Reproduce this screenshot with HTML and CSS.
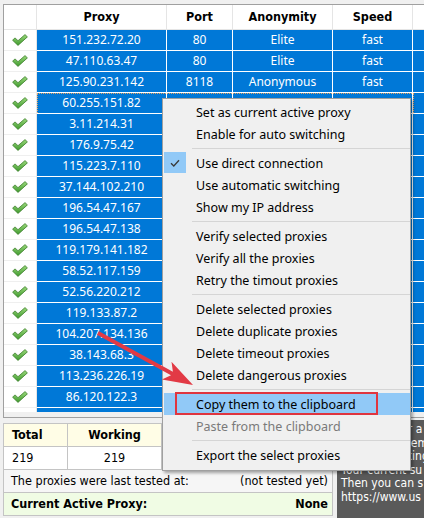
FILE: index.html
```html
<!DOCTYPE html>
<html>
<head>
<meta charset="utf-8">
<link rel="stylesheet" href="styles.css">
</head>
<body>
<svg class="defs" width="0" height="0">
  <defs>
    <linearGradient id="g" x1="0" y1="0" x2="0" y2="1">
      <stop offset="0" stop-color="#9ad97a"/>
      <stop offset="1" stop-color="#3f9a2e"/>
    </linearGradient>
    <symbol id="ok" viewBox="0 0 16 12">
      <polygon points="0.6,6.2 3,3.9 6,6.7 13,0.6 15.4,2.9 6,11.4" fill="url(#g)" stroke="#3d7f2d" stroke-width="0.8" stroke-linejoin="round"/>
    </symbol>
  </defs>
</svg>

<div class="frame">
  <div class="list">
    <div class="row head">
      <div class="cell chk"></div>
      <div class="cell proxy">Proxy</div>
      <div class="cell port">Port</div>
      <div class="cell anon">Anonymity</div>
      <div class="cell speed">Speed</div>
      <div class="cell fill"></div>
    </div>
    <div class="row"><div class="cell chk"><svg class="ok"><use href="#ok"/></svg></div><div class="cell proxy">151.232.72.20</div><div class="cell port">80</div><div class="cell anon">Elite</div><div class="cell speed">fast</div><div class="cell fill"></div></div>
    <div class="row"><div class="cell chk"><svg class="ok"><use href="#ok"/></svg></div><div class="cell proxy">47.110.63.47</div><div class="cell port">80</div><div class="cell anon">Elite</div><div class="cell speed">fast</div><div class="cell fill"></div></div>
    <div class="row"><div class="cell chk"><svg class="ok"><use href="#ok"/></svg></div><div class="cell proxy">125.90.231.142</div><div class="cell port">8118</div><div class="cell anon">Anonymous</div><div class="cell speed">fast</div><div class="cell fill"></div></div>
    <div class="row focus"><div class="cell chk"><svg class="ok"><use href="#ok"/></svg></div><div class="cell proxy">60.255.151.82</div><div class="cell port"></div><div class="cell anon"></div><div class="cell speed"></div><div class="cell fill"></div></div>
    <div class="row"><div class="cell chk"><svg class="ok"><use href="#ok"/></svg></div><div class="cell proxy">3.11.214.31</div><div class="cell port"></div><div class="cell anon"></div><div class="cell speed"></div><div class="cell fill"></div></div>
    <div class="row"><div class="cell chk"><svg class="ok"><use href="#ok"/></svg></div><div class="cell proxy">176.9.75.42</div><div class="cell port"></div><div class="cell anon"></div><div class="cell speed"></div><div class="cell fill"></div></div>
    <div class="row"><div class="cell chk"><svg class="ok"><use href="#ok"/></svg></div><div class="cell proxy">115.223.7.110</div><div class="cell port"></div><div class="cell anon"></div><div class="cell speed"></div><div class="cell fill"></div></div>
    <div class="row"><div class="cell chk"><svg class="ok"><use href="#ok"/></svg></div><div class="cell proxy">37.144.102.210</div><div class="cell port"></div><div class="cell anon"></div><div class="cell speed"></div><div class="cell fill"></div></div>
    <div class="row"><div class="cell chk"><svg class="ok"><use href="#ok"/></svg></div><div class="cell proxy">196.54.47.167</div><div class="cell port"></div><div class="cell anon"></div><div class="cell speed"></div><div class="cell fill"></div></div>
    <div class="row"><div class="cell chk"><svg class="ok"><use href="#ok"/></svg></div><div class="cell proxy">196.54.47.138</div><div class="cell port"></div><div class="cell anon"></div><div class="cell speed"></div><div class="cell fill"></div></div>
    <div class="row"><div class="cell chk"><svg class="ok"><use href="#ok"/></svg></div><div class="cell proxy">119.179.141.182</div><div class="cell port"></div><div class="cell anon"></div><div class="cell speed"></div><div class="cell fill"></div></div>
    <div class="row"><div class="cell chk"><svg class="ok"><use href="#ok"/></svg></div><div class="cell proxy">58.52.117.159</div><div class="cell port"></div><div class="cell anon"></div><div class="cell speed"></div><div class="cell fill"></div></div>
    <div class="row"><div class="cell chk"><svg class="ok"><use href="#ok"/></svg></div><div class="cell proxy">52.56.220.212</div><div class="cell port"></div><div class="cell anon"></div><div class="cell speed"></div><div class="cell fill"></div></div>
    <div class="row"><div class="cell chk"><svg class="ok"><use href="#ok"/></svg></div><div class="cell proxy">119.133.87.2</div><div class="cell port"></div><div class="cell anon"></div><div class="cell speed"></div><div class="cell fill"></div></div>
    <div class="row"><div class="cell chk"><svg class="ok"><use href="#ok"/></svg></div><div class="cell proxy">104.207.134.136</div><div class="cell port"></div><div class="cell anon"></div><div class="cell speed"></div><div class="cell fill"></div></div>
    <div class="row"><div class="cell chk"><svg class="ok"><use href="#ok"/></svg></div><div class="cell proxy">38.143.68.3</div><div class="cell port"></div><div class="cell anon"></div><div class="cell speed"></div><div class="cell fill"></div></div>
    <div class="row"><div class="cell chk"><svg class="ok"><use href="#ok"/></svg></div><div class="cell proxy">113.236.226.19</div><div class="cell port"></div><div class="cell anon"></div><div class="cell speed"></div><div class="cell fill"></div></div>
    <div class="row"><div class="cell chk"><svg class="ok"><use href="#ok"/></svg></div><div class="cell proxy">86.120.122.3</div><div class="cell port"></div><div class="cell anon"></div><div class="cell speed"></div><div class="cell fill"></div></div>
    <div class="row"><div class="cell chk"></div><div class="cell proxy"></div><div class="cell port"></div><div class="cell anon"></div><div class="cell speed"></div><div class="cell fill"></div></div>
  </div>
</div>

<div class="bottom">
  <div class="stats">
    <div class="srow shead"><div class="sc c1">Total</div><div class="sc c2">Working</div><div class="sc c3"></div></div>
    <div class="srow svals"><div class="sc c1">219</div><div class="sc c2">219</div><div class="sc c3"></div></div>
    <div class="srow tested"><span>The proxies were last tested at:</span><span>(not tested yet)</span></div>
    <div class="srow active"><span>Current Active Proxy:</span><span>None</span></div>
  </div>
  <div class="note">
    <div>Then wait for a</div>
    <div>Sets the system</div>
    <div>Proxy is working</div>
    <div>Your current su</div>
    <div>Then you can s</div>
    <div>https://www.us</div>
  </div>
</div>

<div class="menu">
  <div class="mi"><span class="ico"></span><span class="lbl">Set as current active proxy</span></div>
  <div class="mi"><span class="ico"></span><span class="lbl">Enable for auto switching</span></div>
  <div class="sep"></div>
  <div class="mi on"><span class="ico"><svg class="tick" viewBox="0 0 10 8"><path d="M1 4.2 L3.8 7 L9 1.2" fill="none" stroke="#3a3a3a" stroke-width="1.3"/></svg></span><span class="lbl">Use direct connection</span></div>
  <div class="mi"><span class="ico"></span><span class="lbl">Use automatic switching</span></div>
  <div class="mi"><span class="ico"></span><span class="lbl">Show my IP address</span></div>
  <div class="sep"></div>
  <div class="mi"><span class="ico"></span><span class="lbl">Verify selected proxies</span></div>
  <div class="mi"><span class="ico"></span><span class="lbl">Verify all the proxies</span></div>
  <div class="mi"><span class="ico"></span><span class="lbl">Retry the timout proxies</span></div>
  <div class="sep"></div>
  <div class="mi"><span class="ico"></span><span class="lbl">Delete selected proxies</span></div>
  <div class="mi"><span class="ico"></span><span class="lbl">Delete duplicate proxies</span></div>
  <div class="mi"><span class="ico"></span><span class="lbl">Delete timeout proxies</span></div>
  <div class="mi"><span class="ico"></span><span class="lbl">Delete dangerous proxies</span></div>
  <div class="sep"></div>
  <div class="mi hl"><span class="ico"></span><span class="lbl">Copy them to the clipboard</span><span class="mark"></span></div>
  <div class="mi dis"><span class="ico"></span><span class="lbl">Paste from the clipboard</span></div>
  <div class="sep"></div>
  <div class="mi"><span class="ico"></span><span class="lbl">Export the select proxies</span></div>
</div>

<svg class="arrow" viewBox="0 0 424 518" width="424" height="518">
  <polygon points="98.9,331.2 172.9,371.7 171.5,361.8 193,385 161.9,379.4 171,375.2 97,334.8" fill="#e23a45"/>
</svg>
</body>
</html>
```

FILE: styles.css
```css
* { box-sizing: border-box; }
html, body { margin: 0; padding: 0; }
body {
  width: 424px;
  height: 518px;
  overflow: hidden;
  position: relative;
  background: #f0f0f0;
  font-family: "Noto Sans", sans-serif;
  color: #000;
}
.defs { position: absolute; width: 0; height: 0; }

/* list view */
.frame {
  margin: 4px 0 0 3px;
  border-top: 1px solid #a0a0a0;
  border-left: 1px solid #a0a0a0;
  border-bottom: 1px solid #a0a0a0;
  padding-bottom: 5px;
}
.list { height: 407px; overflow: hidden; background: #fff; }
.row { display: flex; height: 21px; position: relative; }
.cell {
  flex: none;
  height: 21px;
  border-right: 1px solid #fff;
  border-bottom: 1px solid #fff;
  background: #0078d7;
  color: #fff;
  font-size: 12px;
  line-height: 20px;
  text-align: center;
  white-space: nowrap;
  overflow: hidden;
}
.chk {
  width: 33px;
  background: #fff;
  border-right-color: #e6e6e6;
  border-bottom-color: #efefef;
  display: flex;
  align-items: center;
  justify-content: center;
}
.ok { width: 16px; height: 12px; }
.proxy { width: 130px; }
.port { width: 66px; }
.anon { width: 100px; }
.speed { width: 80px; }
.fill { flex: 1; border-right: 0; }

.head { height: 25px; }
.head .cell {
  height: 25px;
  background: #fff;
  color: #000;
  border-right-color: #e5e5e5;
  border-bottom-color: #e5e5e5;
  font-family: "DejaVu Sans", sans-serif;
  font-stretch: condensed;
  font-weight: bold;
  font-size: 12.5px;
  line-height: 24px;
}
.focus::after {
  content: "";
  position: absolute;
  left: 33px;
  top: 0;
  width: 375px;
  height: 20px;
  border: 1px dotted #e0a060;
}

/* bottom area */
.bottom { display: flex; align-items: flex-start; }
.stats {
  margin: 5px 0 0 3px;
  width: 330px;
  flex: none;
  border: 1px solid #c4c4c4;
  font-family: "DejaVu Sans", sans-serif;
  font-stretch: condensed;
  font-size: 12.5px;
}
.srow { display: flex; height: 23px; border-bottom: 1px solid #c4c4c4; line-height: 22px; }
.srow:last-child { border-bottom: 0; height: 22px; }
.sc { border-right: 1px solid #c4c4c4; padding-left: 8px; white-space: nowrap; }
.c1 { width: 64px; }
.c2 { width: 94px; padding-left: 0; text-align: center; }
.c3 { flex: 1; border-right: 0; }
.shead { background: #fffde6; font-weight: bold; }
.svals { background: #fff; }
.tested { background: #f6f6f6; justify-content: space-between; padding: 0 4px 0 7px; }
.active { background: #f0fce4; justify-content: space-between; padding: 0 4px 0 7px; font-weight: bold; }

.note {
  margin: 2px 0 0 4px;
  flex: 1;
  height: 98px;
  background: #5a5a5a;
  color: #fff;
  padding: 3px 0 0 4px;
  white-space: nowrap;
  overflow: hidden;
  font-family: "DejaVu Sans", sans-serif;
  font-stretch: condensed;
  font-size: 12px;
  line-height: 13.6px;
}

/* context menu */
.menu {
  position: absolute;
  left: 162px;
  top: 98px;
  width: 249px;
  padding: 2px 0 4px 1px;
  background: #f0f0f0;
  border: 1px solid #a0a0a0;
  box-shadow: 2px 2px 3px rgba(0, 0, 0, 0.35);
  font-size: 12.5px;
}
.mi { display: flex; align-items: center; height: 22px; position: relative; white-space: nowrap; }
.ico { width: 22px; height: 21px; align-self: flex-start; flex: none; display: flex; align-items: center; justify-content: center; }
.lbl { padding-left: 10px; }
.on .ico { background: #91c9f7; }
.tick { width: 10px; height: 8px; }
.hl { background: #91c9f7; }
.dis { color: #7a7a7a; }
.mark {
  position: absolute;
  left: 11px;
  top: -1px;
  width: 203px;
  height: 23px;
  border: 2px solid #e0353f;
}
.sep { height: 7px; padding-top: 3px; margin-left: 28px; }
.sep::before { content: ""; display: block; height: 1px; background: #d5d5d5; }

.arrow { position: absolute; left: 0; top: 0; pointer-events: none; }
```
